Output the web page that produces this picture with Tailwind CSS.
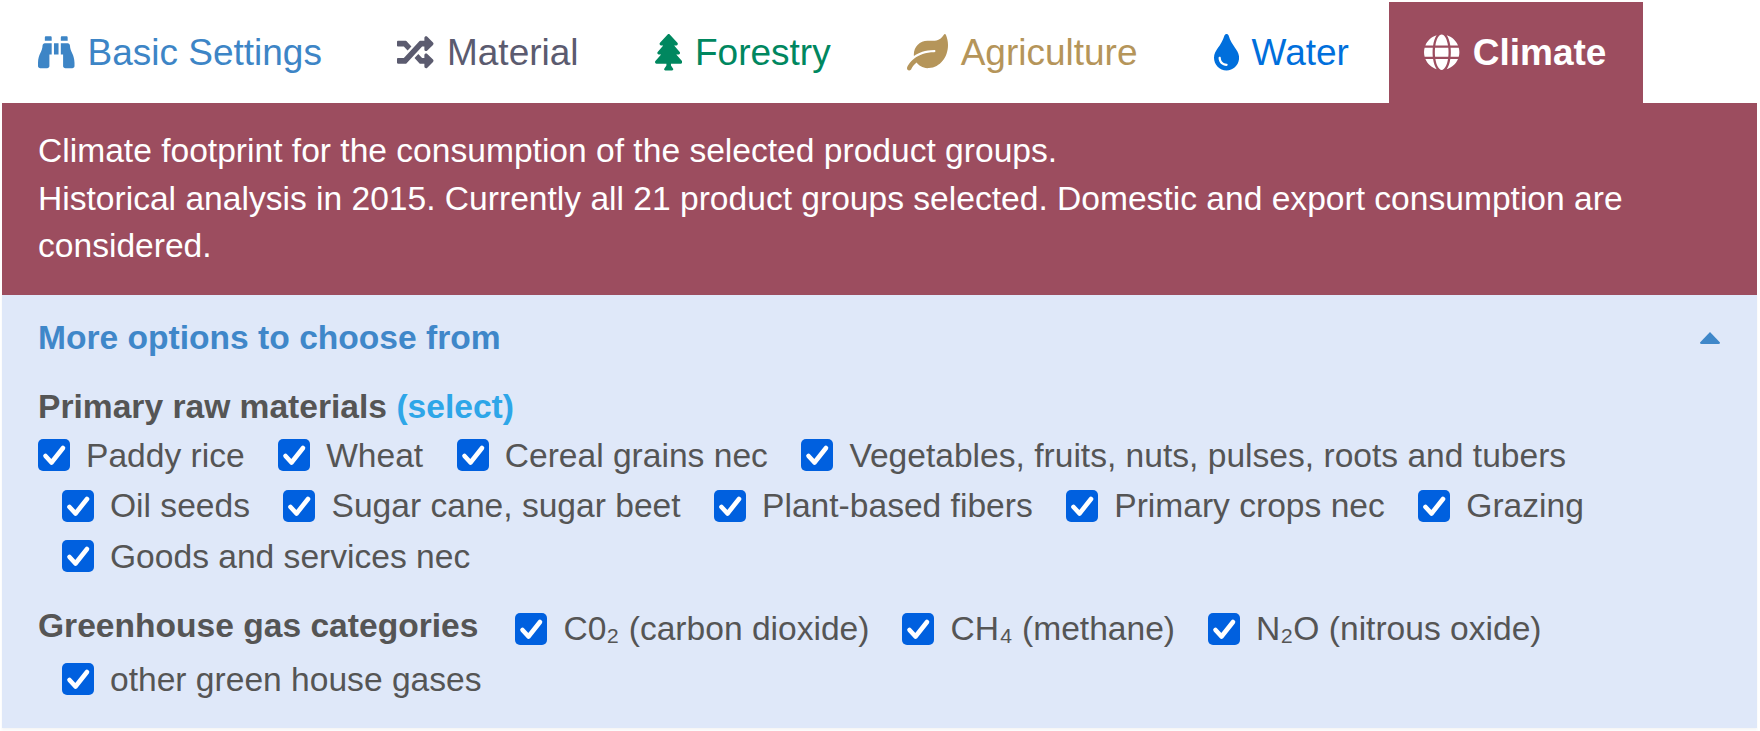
<!DOCTYPE html>
<html lang="en">
<head>
<meta charset="utf-8">
<title>Climate</title>
<script src="https://cdn.jsdelivr.net/npm/@tailwindcss/browser@4"></script>
</head>
<body class="bg-white font-['Liberation_Sans',Arial,sans-serif] text-[33.6px] leading-[47.5px] text-[#555555]">
<div class="w-[1760px] h-[731px] overflow-hidden">
  <nav class="flex gap-[5px] pl-[5px] pt-[2px] h-[103px] text-[37px]">
    <a class="flex items-center gap-[13px] pl-[33px] pr-[37.5px] text-[#3d85c6]">
      <svg class="h-[36.5px] w-[36.5px] fill-current" viewBox="0 0 512 512"><path d="M416 48c0-8.84-7.16-16-16-16h-64c-8.84 0-16 7.16-16 16v48h96V48zM63.91 159.99C61.4 253.84 3.46 274.22 0 404v44c0 17.67 14.33 32 32 32h96c17.67 0 32-14.33 32-32V288h32V128H95.84c-17.63 0-31.45 14.37-31.93 31.99zm384.18 0c-.48-17.62-14.3-31.99-31.93-31.99H320v160h32v160c0 17.67 14.33 32 32 32h96c17.67 0 32-14.33 32-32v-44c-3.46-129.78-61.4-150.16-63.91-244.01zM176 32h-64c-8.84 0-16 7.16-16 16v48h96V48c0-8.84-7.16-16-16-16zm48 256h64V128h-64v160z"/></svg>
      <span>Basic Settings</span></a>
    <a class="flex items-center gap-[13px] pl-[33px] pr-[38px] text-[#5b5b6f]">
      <svg class="h-[36.5px] w-[36.5px] fill-current" viewBox="0 0 512 512"><path d="M504.971 359.029c9.373 9.373 9.373 24.569 0 33.941l-80 79.984c-15.01 15.01-40.971 4.49-40.971-16.971V416h-58.785a12.004 12.004 0 0 1-8.773-3.812l-70.556-75.596 53.333-57.143L352 336h32v-39.981c0-21.438 25.943-31.998 40.971-16.971l80 79.981zM12 176h84l52.781 56.551 53.333-57.143-70.556-75.596A11.999 11.999 0 0 0 122.785 96H12c-6.627 0-12 5.373-12 12v56c0 6.627 5.373 12 12 12zm372 0v39.984c0 21.46 25.961 31.98 40.971 16.971l80-79.984c9.373-9.373 9.373-24.569 0-33.941l-80-79.981C409.943 24.021 384 34.582 384 56.019V96h-58.785a12.004 12.004 0 0 0-8.773 3.812L96 336H12c-6.627 0-12 5.373-12 12v56c0 6.627 5.373 12 12 12h110.785c3.326 0 6.503-1.381 8.773-3.812L352 176h32z"/></svg>
      <span>Material</span></a>
    <a class="flex items-center gap-[13px] pl-[33px] pr-[38px] text-[#00875f]">
      <svg class="h-[36.5px] w-[27.4px] fill-current" viewBox="0 0 384 512"><path d="M378.31 378.49L298.42 288h30.63c9.01 0 16.98-5 20.78-13.06 3.8-8.04 2.55-17.26-3.28-24.05L268.42 160h28.89c9.1 0 17.3-5.35 20.86-13.61 3.52-8.13 1.86-17.59-4.24-24.08L203.66 4.83c-6.03-6.45-17.28-6.45-23.32 0L70.06 122.31c-6.1 6.49-7.75 15.95-4.24 24.08C69.38 154.65 77.59 160 86.69 160h28.89l-78.14 90.91c-5.81 6.78-7.06 15.99-3.27 24.04C37.97 283 45.93 288 54.95 288h30.63L5.69 378.49c-6 6.79-7.36 16.09-3.56 24.26 3.75 8.05 12 13.25 21.01 13.25H160v24.45l-30.29 48.4c-5.32 10.64 2.42 23.16 14.31 23.16h95.96c11.89 0 19.63-12.52 14.31-23.16L224 440.45V416h136.86c9.01 0 17.26-5.2 21.01-13.25 3.8-8.17 2.44-17.47-3.56-24.26z"/></svg>
      <span>Forestry</span></a>
    <a class="flex items-center gap-[13px] pl-[33px] pr-[38px] text-[#b5955a]">
      <svg class="h-[36.5px] w-[41px] fill-current" viewBox="0 0 576 512"><path d="M546.2 9.7c-5.6-12.5-21.6-13-28.3-1.2C486.9 62.4 431.4 96 368 96h-80C182 96 96 182 96 288c0 7 .8 13.7 1.5 20.5C161.3 262.8 253.4 224 384 224c8.8 0 16 7.2 16 16s-7.2 16-16 16C132.6 256 26 410.1 2.4 468c-6.6 16.3 1.2 34.9 17.5 41.6 16.4 6.8 35-1.1 41.8-17.3 1.5-3.6 20.9-47.9 71.9-90.6 32.4 43.9 94 85.8 174.9 77.2C465.5 467.5 576 326.7 576 154.3c0-50.2-10.8-102.2-29.8-144.6z"/></svg>
      <span>Agriculture</span></a>
    <a class="flex items-center gap-[13px] pl-[33px] pr-[35.5px] text-[#006fdc]">
      <svg class="h-[36.5px] w-[25.1px] fill-current" viewBox="0 0 352 512"><path d="M205.22 22.09c-7.94-28.78-49.44-30.12-58.44 0C100.01 179.85 0 222.72 0 333.91 0 432.35 78.72 512 176 512s176-79.65 176-178.09c0-111.75-99.79-153.34-146.78-311.82zM176 448c-61.75 0-112-50.25-112-112 0-8.84 7.16-16 16-16s16 7.16 16 16c0 44.11 35.89 80 80 80 8.84 0 16 7.16 16 16s-7.16 16-16 16z"/></svg>
      <span>Water</span></a>
    <a class="flex items-center gap-[13px] pl-[35px] pr-[36.5px] bg-[#9c4d5f] text-white font-bold">
      <svg class="h-[36.5px] w-[35.4px] fill-current" viewBox="0 0 496 512"><path d="M336.5 160C322 70.7 287.8 8 248 8s-74 62.7-88.5 152h177zM152 256c0 22.2 1.2 43.5 3.3 64h185.3c2.1-20.5 3.3-41.8 3.3-64s-1.2-43.5-3.3-64H155.3c-2.1 20.5-3.3 41.8-3.3 64zm324.7-96c-28.6-67.9-86.5-120.4-158-141.6 24.4 33.8 41.2 84.7 50 141.6h108zM177.2 18.4C105.8 39.6 47.8 92.1 19.3 160h108c8.7-56.9 25.5-107.8 49.9-141.6zM487.4 192H372.7c2.1 21 3.3 42.5 3.3 64s-1.2 43-3.3 64h114.6c5.5-20.5 8.6-41.8 8.6-64s-3.1-43.5-8.5-64zM120 256c0-21.5 1.2-43 3.3-64H8.6C3.2 212.5 0 233.8 0 256s3.2 43.5 8.6 64h114.6c-2-21-3.2-42.5-3.2-64zm39.5 96c14.5 89.3 48.7 152 88.5 152s74-62.7 88.5-152h-177zm159.3 141.6c71.4-21.2 129.4-73.7 158-141.6h-108c-8.8 56.9-25.6 107.8-50 141.6zM19.3 352c28.6 67.9 86.5 120.4 158 141.6-24.4-33.8-41.2-84.7-50-141.6h-108z"/></svg>
      <span>Climate</span></a>
  </nav>

  <section class="mx-[2px] w-[1755px] h-[192px] bg-[#9c4d5f] text-white px-[36px] pt-[24px]">
    <p>Climate footprint for the consumption of the selected product groups.</p>
    <p>Historical analysis in 2015. Currently all 21 product groups selected. Domestic and export consumption are considered.</p>
  </section>

  <section class="mx-[2px] w-[1755px] h-[433px] bg-[#dfe8f9] px-[36px] pt-[19px] shadow-[0_2px_2px_rgba(0,0,0,0.04)]">
    <div class="flex items-center justify-between h-[47.5px] pr-[1px]">
      <h2 class="font-bold text-[#3f87c9]">More options to choose from</h2>
      <svg class="w-[20px] h-[12px] fill-[#3f87c9]" viewBox="0 0 20 12"><path d="M10 0 L20 10.5 Q20 12 18.5 12 L1.5 12 Q0 12 0 10.5 Z"/></svg>
    </div>

    <h3 class="mt-[21px] font-bold h-[47.5px]">Primary raw materials <span class="text-[#2ea6e8]">(select)</span></h3>
    <div class="flex flex-wrap">
      <label class="flex items-center gap-[16px] h-[50.5px] mr-[9.5px]"><span class="relative block w-[32px] h-[32px]"><input type="checkbox" checked class="block w-[32px] h-[32px] m-0 appearance-none rounded-[5px] bg-[#0060df]"><svg class="absolute inset-0 w-[32px] h-[32px] pointer-events-none" viewBox="0 0 32 32" fill="none" stroke="white" stroke-width="4.6" stroke-linecap="round" stroke-linejoin="round"><path d="M7.5 17 L13.5 23.5 L25 9"/></svg></span><span>Paddy rice</span></label>
      <label class="flex items-center gap-[16px] h-[50.5px] ml-[24px] mr-[9.5px]"><span class="relative block w-[32px] h-[32px]"><input type="checkbox" checked class="block w-[32px] h-[32px] m-0 appearance-none rounded-[5px] bg-[#0060df]"><svg class="absolute inset-0 w-[32px] h-[32px] pointer-events-none" viewBox="0 0 32 32" fill="none" stroke="white" stroke-width="4.6" stroke-linecap="round" stroke-linejoin="round"><path d="M7.5 17 L13.5 23.5 L25 9"/></svg></span><span>Wheat</span></label>
      <label class="flex items-center gap-[16px] h-[50.5px] ml-[24px] mr-[9.5px]"><span class="relative block w-[32px] h-[32px]"><input type="checkbox" checked class="block w-[32px] h-[32px] m-0 appearance-none rounded-[5px] bg-[#0060df]"><svg class="absolute inset-0 w-[32px] h-[32px] pointer-events-none" viewBox="0 0 32 32" fill="none" stroke="white" stroke-width="4.6" stroke-linecap="round" stroke-linejoin="round"><path d="M7.5 17 L13.5 23.5 L25 9"/></svg></span><span>Cereal grains nec</span></label>
      <label class="flex items-center gap-[16px] h-[50.5px] ml-[24px] mr-[9.5px]"><span class="relative block w-[32px] h-[32px]"><input type="checkbox" checked class="block w-[32px] h-[32px] m-0 appearance-none rounded-[5px] bg-[#0060df]"><svg class="absolute inset-0 w-[32px] h-[32px] pointer-events-none" viewBox="0 0 32 32" fill="none" stroke="white" stroke-width="4.6" stroke-linecap="round" stroke-linejoin="round"><path d="M7.5 17 L13.5 23.5 L25 9"/></svg></span><span>Vegetables, fruits, nuts, pulses, roots and tubers</span></label>
      <label class="flex items-center gap-[16px] h-[50.5px] ml-[24px] mr-[9.5px]"><span class="relative block w-[32px] h-[32px]"><input type="checkbox" checked class="block w-[32px] h-[32px] m-0 appearance-none rounded-[5px] bg-[#0060df]"><svg class="absolute inset-0 w-[32px] h-[32px] pointer-events-none" viewBox="0 0 32 32" fill="none" stroke="white" stroke-width="4.6" stroke-linecap="round" stroke-linejoin="round"><path d="M7.5 17 L13.5 23.5 L25 9"/></svg></span><span>Oil seeds</span></label>
      <label class="flex items-center gap-[16px] h-[50.5px] ml-[24px] mr-[9.5px]"><span class="relative block w-[32px] h-[32px]"><input type="checkbox" checked class="block w-[32px] h-[32px] m-0 appearance-none rounded-[5px] bg-[#0060df]"><svg class="absolute inset-0 w-[32px] h-[32px] pointer-events-none" viewBox="0 0 32 32" fill="none" stroke="white" stroke-width="4.6" stroke-linecap="round" stroke-linejoin="round"><path d="M7.5 17 L13.5 23.5 L25 9"/></svg></span><span>Sugar cane, sugar beet</span></label>
      <label class="flex items-center gap-[16px] h-[50.5px] ml-[24px] mr-[9.5px]"><span class="relative block w-[32px] h-[32px]"><input type="checkbox" checked class="block w-[32px] h-[32px] m-0 appearance-none rounded-[5px] bg-[#0060df]"><svg class="absolute inset-0 w-[32px] h-[32px] pointer-events-none" viewBox="0 0 32 32" fill="none" stroke="white" stroke-width="4.6" stroke-linecap="round" stroke-linejoin="round"><path d="M7.5 17 L13.5 23.5 L25 9"/></svg></span><span>Plant-based fibers</span></label>
      <label class="flex items-center gap-[16px] h-[50.5px] ml-[24px] mr-[9.5px]"><span class="relative block w-[32px] h-[32px]"><input type="checkbox" checked class="block w-[32px] h-[32px] m-0 appearance-none rounded-[5px] bg-[#0060df]"><svg class="absolute inset-0 w-[32px] h-[32px] pointer-events-none" viewBox="0 0 32 32" fill="none" stroke="white" stroke-width="4.6" stroke-linecap="round" stroke-linejoin="round"><path d="M7.5 17 L13.5 23.5 L25 9"/></svg></span><span>Primary crops nec</span></label>
      <label class="flex items-center gap-[16px] h-[50.5px] ml-[24px] mr-[9.5px]"><span class="relative block w-[32px] h-[32px]"><input type="checkbox" checked class="block w-[32px] h-[32px] m-0 appearance-none rounded-[5px] bg-[#0060df]"><svg class="absolute inset-0 w-[32px] h-[32px] pointer-events-none" viewBox="0 0 32 32" fill="none" stroke="white" stroke-width="4.6" stroke-linecap="round" stroke-linejoin="round"><path d="M7.5 17 L13.5 23.5 L25 9"/></svg></span><span>Grazing</span></label>
      <label class="flex items-center gap-[16px] h-[50.5px] ml-[24px] mr-[9.5px]"><span class="relative block w-[32px] h-[32px]"><input type="checkbox" checked class="block w-[32px] h-[32px] m-0 appearance-none rounded-[5px] bg-[#0060df]"><svg class="absolute inset-0 w-[32px] h-[32px] pointer-events-none" viewBox="0 0 32 32" fill="none" stroke="white" stroke-width="4.6" stroke-linecap="round" stroke-linejoin="round"><path d="M7.5 17 L13.5 23.5 L25 9"/></svg></span><span>Goods and services nec</span></label>
    </div>

    <div class="flex flex-wrap mt-[22px]">
      <h3 class="font-bold mr-[13px] -mt-[2px] h-[47.5px]">Greenhouse gas categories</h3>
      <label class="flex items-center gap-[16px] h-[50.5px] ml-[24px] mr-[9px]"><span class="relative block w-[32px] h-[32px]"><input type="checkbox" checked class="block w-[32px] h-[32px] m-0 appearance-none rounded-[5px] bg-[#0060df]"><svg class="absolute inset-0 w-[32px] h-[32px] pointer-events-none" viewBox="0 0 32 32" fill="none" stroke="white" stroke-width="4.6" stroke-linecap="round" stroke-linejoin="round"><path d="M7.5 17 L13.5 23.5 L25 9"/></svg></span><span>C0₂ (carbon dioxide)</span></label>
      <label class="flex items-center gap-[16px] h-[50.5px] ml-[24px] mr-[9px]"><span class="relative block w-[32px] h-[32px]"><input type="checkbox" checked class="block w-[32px] h-[32px] m-0 appearance-none rounded-[5px] bg-[#0060df]"><svg class="absolute inset-0 w-[32px] h-[32px] pointer-events-none" viewBox="0 0 32 32" fill="none" stroke="white" stroke-width="4.6" stroke-linecap="round" stroke-linejoin="round"><path d="M7.5 17 L13.5 23.5 L25 9"/></svg></span><span>CH₄ (methane)</span></label>
      <label class="flex items-center gap-[16px] h-[50.5px] ml-[24px] mr-[9px]"><span class="relative block w-[32px] h-[32px]"><input type="checkbox" checked class="block w-[32px] h-[32px] m-0 appearance-none rounded-[5px] bg-[#0060df]"><svg class="absolute inset-0 w-[32px] h-[32px] pointer-events-none" viewBox="0 0 32 32" fill="none" stroke="white" stroke-width="4.6" stroke-linecap="round" stroke-linejoin="round"><path d="M7.5 17 L13.5 23.5 L25 9"/></svg></span><span>N₂O (nitrous oxide)</span></label>
      <label class="flex items-center gap-[16px] h-[50.5px] ml-[24px] mr-[9px]"><span class="relative block w-[32px] h-[32px]"><input type="checkbox" checked class="block w-[32px] h-[32px] m-0 appearance-none rounded-[5px] bg-[#0060df]"><svg class="absolute inset-0 w-[32px] h-[32px] pointer-events-none" viewBox="0 0 32 32" fill="none" stroke="white" stroke-width="4.6" stroke-linecap="round" stroke-linejoin="round"><path d="M7.5 17 L13.5 23.5 L25 9"/></svg></span><span>other green house gases</span></label>
    </div>
  </section>
</div>
</body>
</html>
